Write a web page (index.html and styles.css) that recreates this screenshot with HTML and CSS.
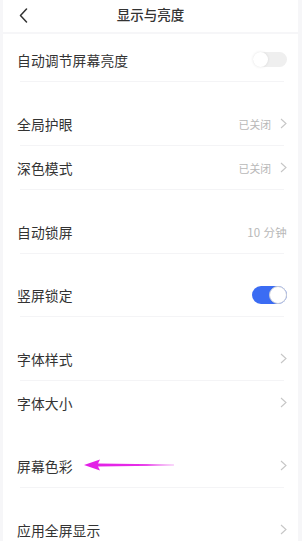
FILE: index.html
```html
<!DOCTYPE html>
<html lang="zh-CN">
<head>
<meta charset="utf-8">
<link rel="stylesheet" href="styles.css">
</head>
<body>
<div class="page">
  <header class="topbar">
    <svg class="back" width="9" height="15" viewBox="0 0 9 15"><path d="M7.5 1 L1.5 7.5 L7.5 14" fill="none" stroke="#333" stroke-width="1.5" stroke-linecap="round" stroke-linejoin="round"/></svg>
    <h1 class="title">显示与亮度</h1>
  </header>
  <main class="list">
    <section class="group">
      <div class="row"><span class="label">自动调节屏幕亮度</span><span class="toggle off"><span class="knob"></span></span></div>
      <div class="divider"></div>
    </section>
    <section class="group">
      <div class="row"><span class="label">全局护眼</span><span class="value">已关闭</span><svg class="chev" width="7" height="11" viewBox="0 0 7 11"><path d="M1 1 L6 5.5 L1 10" fill="none" stroke="#c6c6c6" stroke-width="1.1"/></svg></div>
      <div class="divider"></div>
      <div class="row"><span class="label">深色模式</span><span class="value">已关闭</span><svg class="chev" width="7" height="11" viewBox="0 0 7 11"><path d="M1 1 L6 5.5 L1 10" fill="none" stroke="#c6c6c6" stroke-width="1.1"/></svg></div>
      <div class="divider"></div>
    </section>
    <section class="group">
      <div class="row"><span class="label">自动锁屏</span><span class="value wide">10 分钟</span></div>
      <div class="divider"></div>
    </section>
    <section class="group tight">
      <div class="row"><span class="label">竖屏锁定</span><span class="toggle on"><span class="knob"></span></span></div>
      <div class="divider"></div>
    </section>
    <section class="group">
      <div class="row"><span class="label">字体样式</span><svg class="chev" width="7" height="11" viewBox="0 0 7 11"><path d="M1 1 L6 5.5 L1 10" fill="none" stroke="#c6c6c6" stroke-width="1.1"/></svg></div>
      <div class="divider"></div>
      <div class="row"><span class="label">字体大小</span><svg class="chev" width="7" height="11" viewBox="0 0 7 11"><path d="M1 1 L6 5.5 L1 10" fill="none" stroke="#c6c6c6" stroke-width="1.1"/></svg></div>
    </section>
    <section class="group">
      <div class="row anno-row"><span class="label">屏幕色彩</span>
        <svg class="arrow" width="92" height="14" viewBox="0 0 92 14">
          <defs><linearGradient id="ag" x1="0" x2="1" y1="0" y2="0"><stop offset="0" stop-color="#e21ee6"/><stop offset="0.7" stop-color="#e62ee8"/><stop offset="1" stop-color="#ee7cf0" stop-opacity="0.6"/></linearGradient></defs>
          <polygon points="0,7 16,1.5 14,5.4 90,6.5 90,7.5 14,8.6 16,12.5" fill="url(#ag)"/>
        </svg>
        <svg class="chev" width="7" height="11" viewBox="0 0 7 11"><path d="M1 1 L6 5.5 L1 10" fill="none" stroke="#c6c6c6" stroke-width="1.1"/></svg></div>
      <div class="divider"></div>
    </section>
    <section class="group">
      <div class="row"><span class="label">应用全屏显示</span><svg class="chev" width="7" height="11" viewBox="0 0 7 11"><path d="M1 1 L6 5.5 L1 10" fill="none" stroke="#c6c6c6" stroke-width="1.1"/></svg></div>
    </section>
  </main>
</div>
</body>
</html>
```
FILE: styles.css
```css
* { box-sizing: border-box; }
html, body { margin: 0; padding: 0; }
body {
  background: #f6f6f8;
  font-family: "Noto Sans CJK SC", "Noto Sans", sans-serif;
  color: #2a2a2a;
  width: 302px;
  height: 541px;
  overflow: hidden;
}
.page {
  margin: 0 4px 0 3px;
  background: #fff;
  min-height: 541px;
}
.topbar {
  height: 34px;
  display: flex;
  align-items: center;
  justify-content: center;
  position: relative;
  border-bottom: 2px solid #f6f6f8;
}
.back {
  position: absolute;
  left: 16px;
  top: 8px;
}
.title {
  margin: 0;
  font-size: 13.5px;
  font-weight: 500;
  color: #333;
  line-height: 1;
  margin-top: -2px;
}
.list {
  padding-top: 4px;
}
.group + .group {
  margin-top: 20px;
}
.group.tight {
  margin-top: 19px;
}
.row {
  height: 43px;
  display: flex;
  align-items: center;
  padding: 0 11px 0 14px;
  position: relative;
}
.label {
  font-size: 13.8px;
  color: #333;
  flex: 1;
  letter-spacing: 0.1px;
}
.value {
  font-size: 10.8px;
  color: #b8b8b8;
}
.value.wide {
  font-size: 11.5px;
  letter-spacing: 0.3px;
}
.value + .chev { margin-left: 9px; }
.chev { flex: none; }
.divider {
  height: 1px;
  background: #f4f4f6;
  margin: 0 14px 0 17px;
}
.toggle {
  width: 34px;
  height: 17px;
  border-radius: 9px;
  position: relative;
  flex: none;
}
.toggle.off {
  background: #efefef;
  height: 15px;
}
.toggle.off .knob {
  position: absolute;
  left: 0;
  top: 0;
  width: 15px;
  height: 15px;
  border-radius: 50%;
  background: #fff;
  box-shadow: 0 0 3px rgba(0,0,0,0.10);
}
.toggle.on {
  background: #3b6cf3;
  width: 35px;
  height: 18px;
}
.toggle.on .knob {
  position: absolute;
  right: 0;
  top: 0;
  width: 18px;
  height: 18px;
  border-radius: 50%;
  background: #fff;
  border: 1.5px solid #c9ccd6;
}
.arrow {
  position: absolute;
  left: 81px;
  top: 14px;
}
```
